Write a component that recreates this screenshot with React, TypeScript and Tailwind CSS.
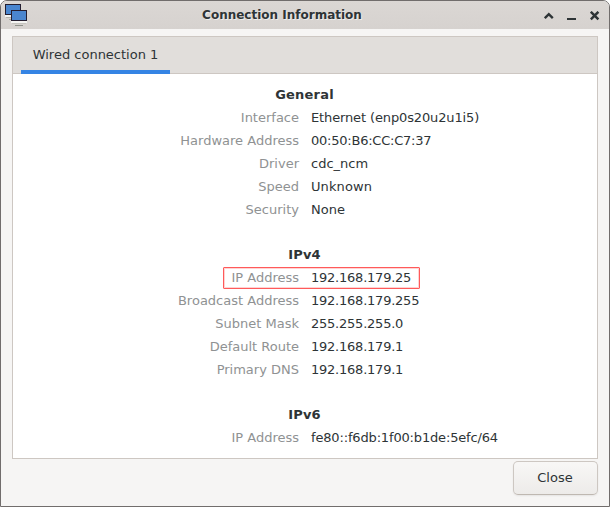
type Row = { label: string; value: string; tracking?: string; highlighted?: boolean };

const sections: { title: string; rows: Row[] }[] = [
  {
    title: "General",
    rows: [
      { label: "Interface", value: "Ethernet (enp0s20u2u1i5)", tracking: "tracking-[-0.13px]" },
      { label: "Hardware Address", value: "00:50:B6:CC:C7:37", tracking: "tracking-[-0.23px]" },
      { label: "Driver", value: "cdc_ncm" },
      { label: "Speed", value: "Unknown", tracking: "tracking-[0.1px]" },
      { label: "Security", value: "None" },
    ],
  },
  {
    title: "IPv4",
    rows: [
      { label: "IP Address", value: "192.168.179.25", tracking: "tracking-[-0.23px]", highlighted: true },
      { label: "Broadcast Address", value: "192.168.179.255", tracking: "tracking-[-0.23px]" },
      { label: "Subnet Mask", value: "255.255.255.0", tracking: "tracking-[-0.23px]" },
      { label: "Default Route", value: "192.168.179.1", tracking: "tracking-[-0.23px]" },
      { label: "Primary DNS", value: "192.168.179.1", tracking: "tracking-[-0.23px]" },
    ],
  },
  {
    title: "IPv6",
    rows: [{ label: "IP Address", value: "fe80::f6db:1f00:b1de:5efc/64", tracking: "tracking-[-0.16px]" }],
  },
];

function NetworkIcon() {
  return (
    <svg width="24" height="28" viewBox="0 0 24 28" shapeRendering="crispEdges">
      <path d="M0 14h12v2H0z" fill="#f4f4f2" />
      <path d="M1 16h9v1H1z" fill="#b5b5af" />
      <path d="M4 18h6v1H4z" fill="#a9aca4" />
      <rect x="0.5" y="3.5" width="15" height="10" rx="1" fill="#4a86cf" stroke="#241f31" />
      <path d="M6 20h16v2H6z" fill="#f4f4f2" />
      <path d="M7 22h14v1H7z" fill="#c5c5bf" />
      <path d="M10 24h8v1h-8z" fill="#8f928b" />
      <rect x="6.5" y="9.5" width="15" height="10" rx="1" fill="#4a86cf" stroke="#241f31" />
    </svg>
  );
}

function TitleBar() {
  return (
    <header className="flex h-7 shrink-0 items-center bg-linear-to-b from-[#dbd7d4] to-[#d6d2cf]">
      <div className="w-7 shrink-0 pl-1">
        <NetworkIcon />
      </div>
      <h1 className="flex-1 pl-px text-center text-[12px] leading-7 font-bold whitespace-nowrap text-[#2e3436] [text-shadow:1px_1px_0_#eeeceb]">
        Connection Information
      </h1>
      <div className="flex w-[75px] shrink-0 justify-end gap-[13px] pt-[2px] pr-[9px]">
        <svg width="10" height="10" viewBox="0 0 10 10" fill="none" stroke="#2e3436" strokeWidth="2.4">
          <path d="M0.8 7.2 4.8 3.2l4 4" />
        </svg>
        <svg width="10" height="10" viewBox="0 0 10 10">
          <path d="M0 7h9v2H0z" fill="#2e3436" />
        </svg>
        <svg width="10" height="10" viewBox="0 0 10 10" fill="none" stroke="#2e3436" strokeWidth="2.5">
          <path d="M0.8 0.8l7.6 7.6M8.4 0.8.8 8.4" />
        </svg>
      </div>
    </header>
  );
}

export default function App() {
  return (
    <div className="h-[507px] w-[610px] bg-white font-['DejaVu_Sans',sans-serif] text-[13px] text-[#2e3436]">
      <div className="flex h-full flex-col overflow-hidden rounded-t-[7px] border border-[#716d6c] bg-[#f6f5f4]">
        <TitleBar />
        <main className="mx-[11px] mt-[7px] flex h-[423px] shrink-0 flex-col border border-[#cdc7c2] bg-white">
          <nav className="flex h-[37px] shrink-0 border-b border-[#cdc7c2] bg-[#e1dedb] pl-2">
            <button className="h-[37px] w-[149px] border-b-4 border-[#3584e4] pt-[3px] leading-[30px]">
              Wired connection 1
            </button>
          </nav>
          <div className="flex flex-col gap-[22px] pt-[9px]">
            {sections.map(({ title, rows }) => (
              <section key={title} className="leading-[23px]">
                <h2 className="pr-px text-center font-bold tracking-[0.2px]">{title}</h2>
                {rows.map(({ label, value, tracking, highlighted }) => (
                  <div key={label} className="relative grid grid-cols-[286px_1fr] gap-x-3">
                    <span className="text-right text-[#8f9293]">{label}</span>
                    <span className={tracking}>{value}</span>
                    {highlighted && (
                      <span className="absolute top-px left-[210px] h-[22px] w-[197px] rounded-[1px] border border-[#ff5a5a] shadow-[inset_0_0_0_1px_rgba(255,80,80,0.25)]" />
                    )}
                  </div>
                ))}
              </section>
            ))}
          </div>
        </main>
        <footer className="flex justify-end pt-[2px] pr-[11px]">
          <button className="h-[34px] w-[85px] rounded-[5px] border border-[#cdc7c2] border-b-[#bfb8b1] bg-linear-to-b from-[#f8f7f6] to-[#edebe9] pr-px shadow-[0_1px_2px_rgba(0,0,0,0.07)]">
            Close
          </button>
        </footer>
      </div>
    </div>
  );
}
